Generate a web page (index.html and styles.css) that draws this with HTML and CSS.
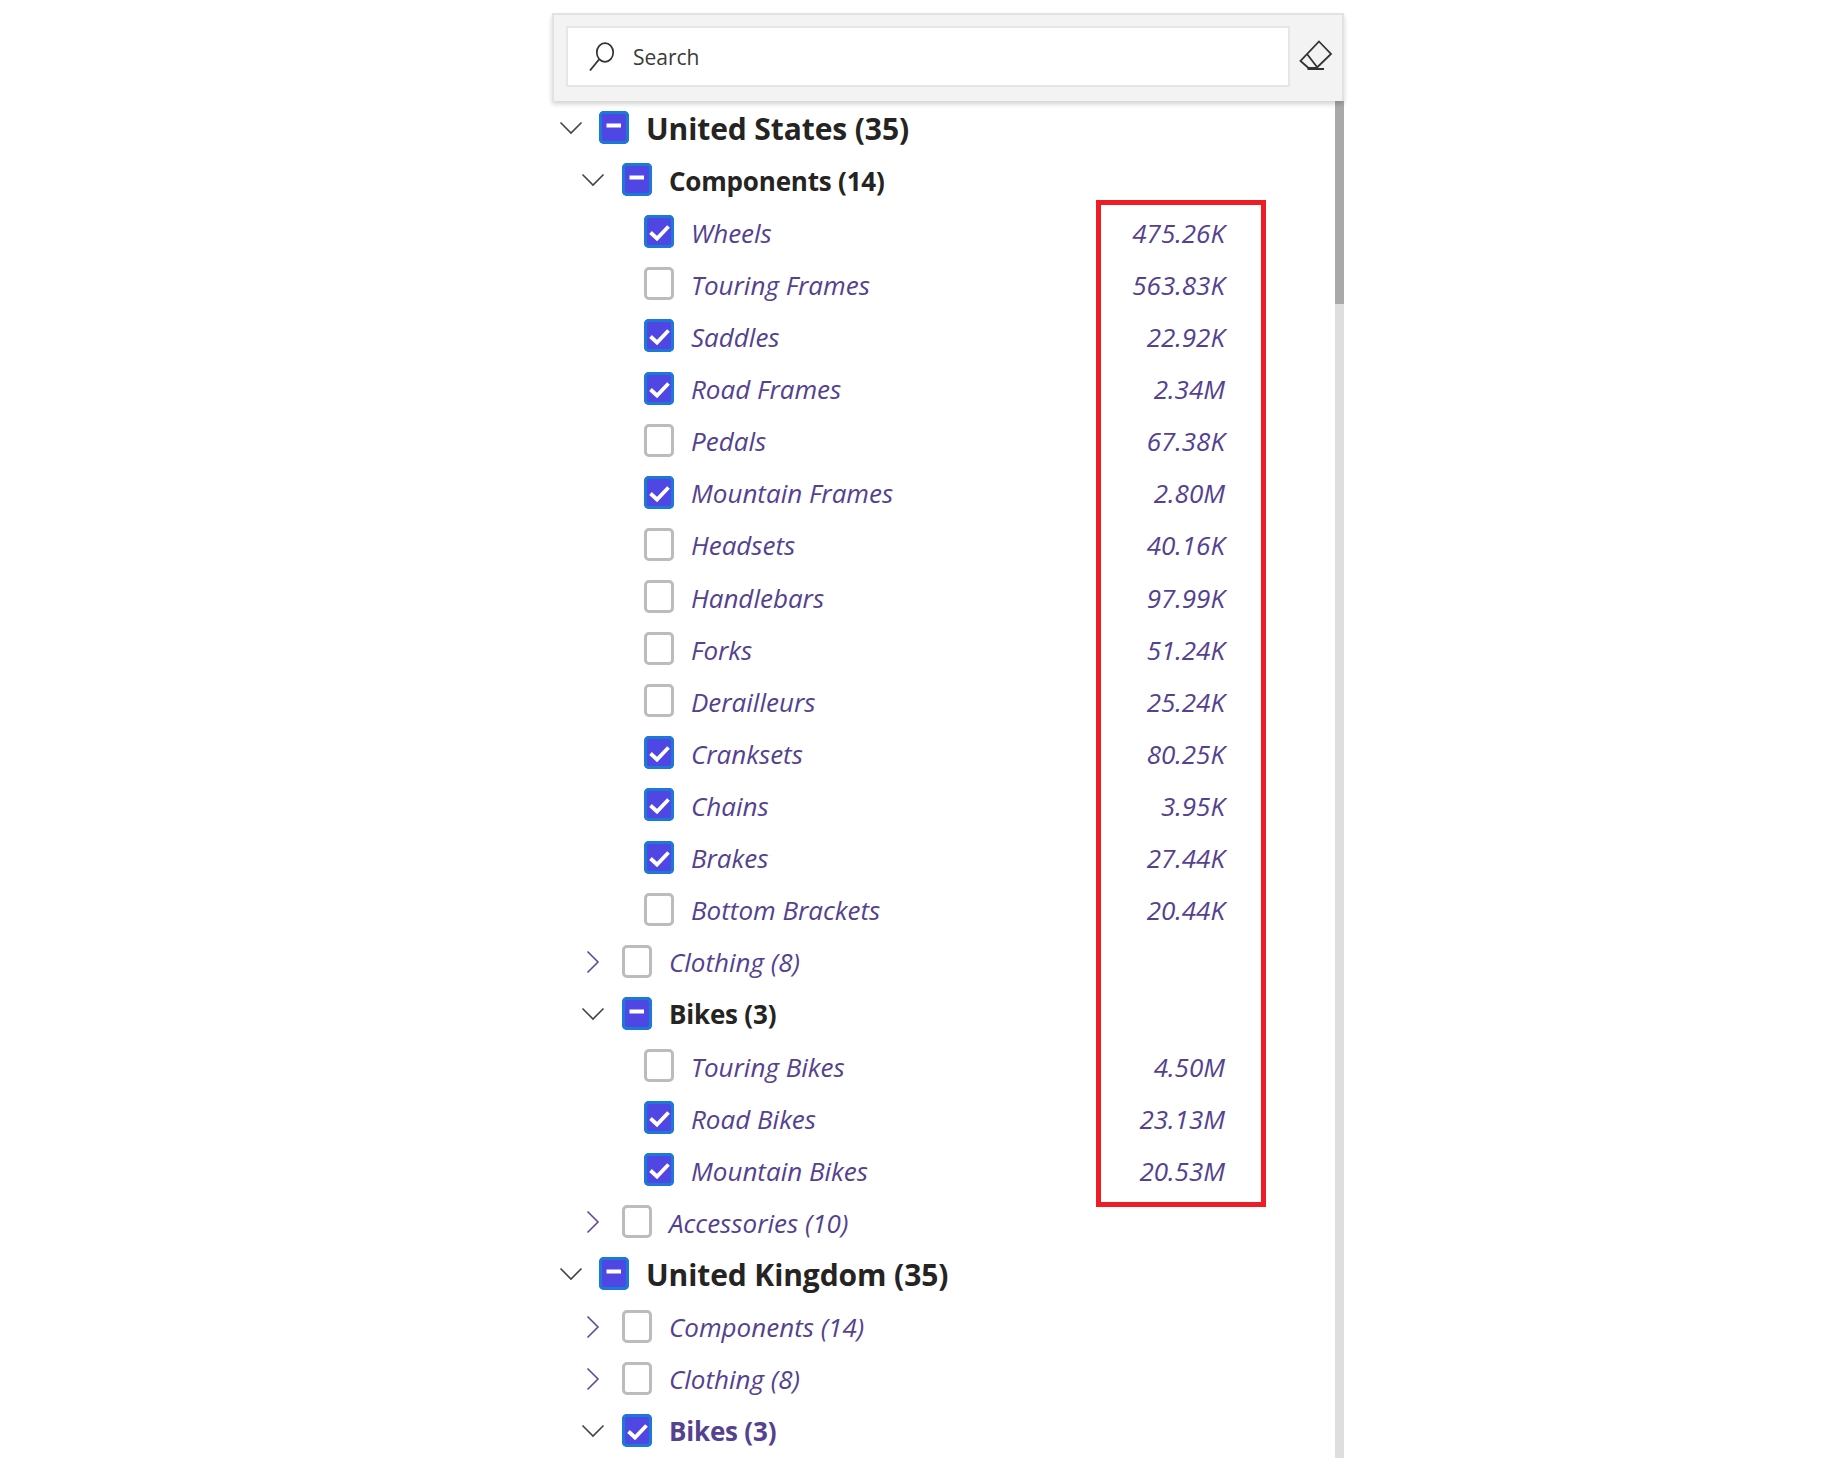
FILE: index.html
```html
<!DOCTYPE html>
<html lang="en">
<head>
<meta charset="utf-8">
<title>Slicer</title>
<link rel="stylesheet" href="styles.css">
</head>
<body>
<svg class="defs" width="0" height="0" aria-hidden="true">
  <symbol id="down" viewBox="0 0 24 14"><path d="M1.5 1.5 12 12 22.500 1.500" fill="none" stroke="currentColor" stroke-width="1.6"/></symbol>
  <symbol id="right" viewBox="0 0 14 24"><path d="M1.500 1.500 12 12 1.500 22.500" fill="none" stroke="currentColor" stroke-width="1.6"/></symbol>
  <symbol id="minus" viewBox="0 0 30 33"><path d="M7.500 14.500H22" fill="none" stroke="#fff" stroke-width="4"/></symbol>
  <symbol id="check" viewBox="0 0 30 33"><path d="M6.500 17.500 13 23.500 24.500 11.500" fill="none" stroke="#fff" stroke-width="3.800"/></symbol>
</svg>
<main class="slicer">
  <header class="slicer-head">
    <div class="search">
      <svg class="search-icon" viewBox="0 0 26 30"><ellipse cx="16" cy="10.500" rx="8.200" ry="9.300" fill="none" stroke="#333" stroke-width="1.700"/><path d="M10 17.500 1 28.500" fill="none" stroke="#333" stroke-width="1.900"/></svg>
      <span class="search-text">Search</span>
    </div>
    <svg class="eraser" viewBox="0 0 34 32"><path d="M20 1.500 32 14 17.500 28H9.500L1.500 21Z M8 14 18 27" fill="none" stroke="#333" stroke-width="1.800"/><path d="M8.500 29H25" stroke="#333" stroke-width="2"/></svg>
  </header>
  <div class="tree">
    <div class="row l0 bold"><svg class="chev down"><use href="#down"/></svg><svg class="box on"><use href="#minus"/></svg><span class="label">United States (35)</span></div>
    <div class="row l1 semi"><svg class="chev down"><use href="#down"/></svg><svg class="box on"><use href="#minus"/></svg><span class="label">Components (14)</span></div>
    <div class="row l2"><svg class="box on"><use href="#check"/></svg><span class="label">Wheels</span><span class="val">475.26K</span></div>
    <div class="row l2"><span class="box off"></span><span class="label">Touring Frames</span><span class="val">563.83K</span></div>
    <div class="row l2"><svg class="box on"><use href="#check"/></svg><span class="label">Saddles</span><span class="val">22.92K</span></div>
    <div class="row l2"><svg class="box on"><use href="#check"/></svg><span class="label">Road Frames</span><span class="val">2.34M</span></div>
    <div class="row l2"><span class="box off"></span><span class="label">Pedals</span><span class="val">67.38K</span></div>
    <div class="row l2"><svg class="box on"><use href="#check"/></svg><span class="label">Mountain Frames</span><span class="val">2.80M</span></div>
    <div class="row l2"><span class="box off"></span><span class="label">Headsets</span><span class="val">40.16K</span></div>
    <div class="row l2"><span class="box off"></span><span class="label">Handlebars</span><span class="val">97.99K</span></div>
    <div class="row l2"><span class="box off"></span><span class="label">Forks</span><span class="val">51.24K</span></div>
    <div class="row l2"><span class="box off"></span><span class="label">Derailleurs</span><span class="val">25.24K</span></div>
    <div class="row l2"><svg class="box on"><use href="#check"/></svg><span class="label">Cranksets</span><span class="val">80.25K</span></div>
    <div class="row l2"><svg class="box on"><use href="#check"/></svg><span class="label">Chains</span><span class="val">3.95K</span></div>
    <div class="row l2"><svg class="box on"><use href="#check"/></svg><span class="label">Brakes</span><span class="val">27.44K</span></div>
    <div class="row l2"><span class="box off"></span><span class="label">Bottom Brackets</span><span class="val">20.44K</span></div>
    <div class="row l1"><svg class="chev side"><use href="#right"/></svg><span class="box off"></span><span class="label">Clothing (8)</span></div>
    <div class="row l1 semi"><svg class="chev down"><use href="#down"/></svg><svg class="box on"><use href="#minus"/></svg><span class="label">Bikes (3)</span></div>
    <div class="row l2"><span class="box off"></span><span class="label">Touring Bikes</span><span class="val">4.50M</span></div>
    <div class="row l2"><svg class="box on"><use href="#check"/></svg><span class="label">Road Bikes</span><span class="val">23.13M</span></div>
    <div class="row l2"><svg class="box on"><use href="#check"/></svg><span class="label">Mountain Bikes</span><span class="val">20.53M</span></div>
    <div class="row l1"><svg class="chev side"><use href="#right"/></svg><span class="box off"></span><span class="label">Accessories (10)</span></div>
    <div class="row l0 bold"><svg class="chev down"><use href="#down"/></svg><svg class="box on"><use href="#minus"/></svg><span class="label">United Kingdom (35)</span></div>
    <div class="row l1"><svg class="chev side"><use href="#right"/></svg><span class="box off"></span><span class="label">Components (14)</span></div>
    <div class="row l1"><svg class="chev side"><use href="#right"/></svg><span class="box off"></span><span class="label">Clothing (8)</span></div>
    <div class="row l1 semi purple"><svg class="chev down"><use href="#down"/></svg><svg class="box on"><use href="#check"/></svg><span class="label">Bikes (3)</span></div>
    <div class="track"><div class="thumb"></div></div>
    <div class="highlight"></div>
  </div>
</main>
</body>
</html>
```
FILE: styles.css
```css
* { box-sizing: border-box; }
html, body { margin: 0; background: #fff; }
body { padding: 13px 0 0 552px; width: 1838px; height: 1477px; overflow: hidden; font-family: "Open Sans", "Liberation Sans", sans-serif; }
.defs { position: absolute; }
.slicer { width: 792px; }
.slicer-head {
  height: 88px; background: #f3f3f3; border: 2px solid #e2e2e2; border-bottom: 0;
  display: flex; align-items: flex-start; padding: 11px 0 0 12px;
  box-shadow: 0 3px 5px rgba(0,0,0,.18); position: relative; z-index: 1;
}
.search {
  width: 724px; height: 61px; background: #fff; border: 2px solid #e6e6e6;
  display: flex; align-items: center; padding-left: 21px;
}
.search-icon { width: 26px; height: 30px; margin-right: 18px; }
.search-text { font-size: 21px; color: #3a3a3a; margin-top: 1px; }
.eraser { width: 34px; height: 32px; margin: 14px 0 0 9px; }
.tree { position: relative; height: 1357px; padding-top: 2px; }
.row { height: 52.120px; display: flex; align-items: center; position: relative; color: #54418f; font-style: italic; font-size: 26px; }
.row.l0 { padding-left: 47px; }
.row.l1 { padding-left: 70px; }
.row.l2 { padding-left: 92px; }
.chev { position: absolute; color: #444; }
.chev.down { width: 24px; height: 14px; top: 18px; }
.chev.side { width: 14px; height: 24px; top: 13px; color: #5f4a9e; }
.l0 .chev.down { left: 7px; }
.l1 .chev.down { left: 29px; }
.l1 .chev.side { left: 34px; }
.box { width: 30px; height: 33px; border-radius: 5px; flex: none; margin-right: 17px; margin-top: -3px; }
.box.on { background: #5046e4; border: 0; box-shadow: inset 0 0 0 3px #1a7ad6; }
.box.off { background: #fff; border: 3px solid #bcbcbc; }
.label { white-space: nowrap; margin-top: -1px; }
.val { position: absolute; right: 119px; white-space: nowrap; margin-top: -1px; }
.bold, .semi { font-style: normal; color: #252423; font-weight: 700; }
.bold { font-size: 30px; letter-spacing: -0.1px; }
.semi { font-size: 26px; letter-spacing: -0.2px; }
.semi.purple { color: #54418f; }
.track { position: absolute; right: 0; top: 0; width: 9px; height: 1357px; background: #dedede; }
.thumb { height: 203px; background: #a9a9a9; }
.highlight { position: absolute; left: 544px; top: 99px; width: 170px; height: 1007px; border: 5px solid #ee1c25; pointer-events: none; }
```
